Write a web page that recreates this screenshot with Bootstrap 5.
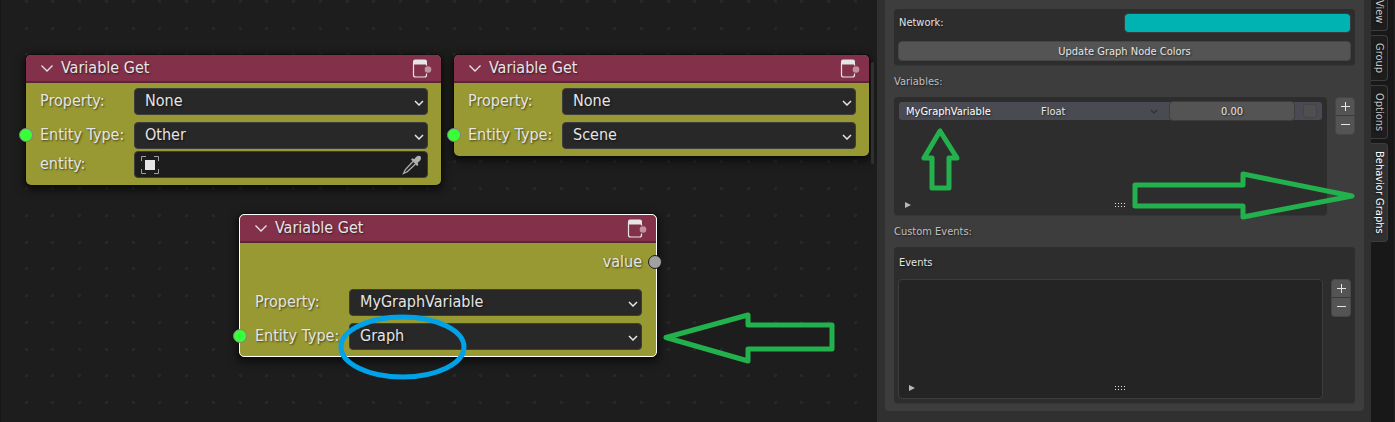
<!DOCTYPE html>
<html lang="en" data-bs-theme="dark">
<head>
<meta charset="utf-8">
<meta name="viewport" content="width=device-width, initial-scale=1">
<title>Behavior Graphs</title>
<link href="https://cdn.jsdelivr.net/npm/bootstrap@5.3.0/dist/css/bootstrap.min.css" rel="stylesheet">
<style>
  body { background: #1d1d1d; color: #e5e5e5; font-family: "DejaVu Sans Condensed", "DejaVu Sans", sans-serif; font-size: 16px; line-height: 20px; text-shadow: 1px 1px 2px rgba(0,0,0,.6); }
  h2, h3 { font-size: inherit; line-height: inherit; font-weight: 400; margin: 0; color: inherit; }
  input, select, button { text-shadow: inherit; }

  /* Node editor */
  .node-canvas { border-left: 1px solid #161616; background: #1d1d1d url("data:image/svg+xml,%3Csvg xmlns='http://www.w3.org/2000/svg' width='107' height='107'%3E%3Cdefs%3E%3Cg id='r' fill='%23272727'%3E%3Cpath d='M0 0h3v3h-3zM26 0h3v3h-3zM53 0h3v3h-3zM80 0h3v3h-3z'/%3E%3C/g%3E%3C/defs%3E%3Cuse href='%23r'/%3E%3Cuse href='%23r' y='27'/%3E%3Cuse href='%23r' y='53'/%3E%3Cuse href='%23r' y='80'/%3E%3C/svg%3E") 24px 0; }
  .node { position: absolute; width: 415px; border-radius: 5px; background: #999933; box-shadow: 0 0 0 1px rgba(10,10,10,.6), 0 3px 9px 2px rgba(0,0,0,.6); }
  .node.selected { width: 418px; border: 1px solid #fff; }
  .node-head { height: 28px; padding: 0 9px 0 15px; background: #83314a; border-bottom: 2px solid #5a2534; border-radius: 5px 5px 0 0; }
  .node-body { display: flex; flex-direction: column; gap: 7px; padding: 5px 13px 7px 14px; }
  .selected .node-body { padding: 5px 14px 6px 15px; }
  .node-output { margin-bottom: 7px; }
  .node-pair { display: flex; flex-direction: column; gap: 2px; }
  .node-line { height: 27px; }
  .node-line > label { flex: 0 0 94px; padding-bottom: 2px; white-space: nowrap; }
  .node-field { height: 27px; padding: 0 20px 1px 10px; border: 1px solid #3d3d3d; border-radius: 4px; color: #e5e5e5; background-color: #282828; font-size: 16px; line-height: 20px; }
  select.node-field { background-image: url("data:image/svg+xml,%3Csvg xmlns='http://www.w3.org/2000/svg' width='10' height='6'%3E%3Cpath d='M1 1l4 4 4-4' fill='none' stroke='%23e5e5e5' stroke-width='1.5'/%3E%3C/svg%3E"); background-size: 10px 6px; background-position: right 3px top 11px; }
  .entity-wrap { background: #1d1d1d; border: 1px solid #3d3d3d; border-radius: 4px; height: 27px; padding: 0 5px; }
  .entity-wrap input { background: none; border: 0; outline: 0; min-width: 0; color: inherit; }
  .plain-btn { background: none; border: 0; padding: 0; line-height: 0; color: inherit; }
  .socket { position: absolute; width: 14px; height: 14px; border-radius: 50%; border: 1px solid #808080; background: #39ff39; }
  .socket-in { left: -7px; }
  .socket-out { right: -6px; background: #a1a1a1; border: 1px solid #1d1d1d; }
  .view-scroll { position: absolute; right: 3px; top: 62px; width: 3px; height: 102px; border-radius: 2px; background: #303030; }

  /* Sidebar */
  .side { flex: 0 0 494px; padding: 0 7px 10px 8px; background: #303030; font-size: 11px; line-height: 16px; }
  .panel { background: #3d3d3d; border-radius: 0 0 4px 4px; padding: 9px 9px 8px; }
  .box { background: #2d2d2d; border-radius: 4px; box-shadow: 0 1px 0 #353535; }
  .soft { color: #bfbfbf; padding: 9px 0 7px; }
  .inset { padding-left: 1px; }
  .swatch { -webkit-appearance: none; appearance: none; width: 227px; height: 20px; padding: 0; border: 1px solid #3d3d3d; border-radius: 4px; background: none; overflow: hidden; }
  .swatch::-webkit-color-swatch-wrapper { padding: 0; }
  .swatch::-webkit-color-swatch { border: 0; border-radius: 3px; }
  .tool { background: #545454; border: 1px solid #464646; border-radius: 4px; color: #e5e5e5; height: 20px; padding: 1px 0 0; font-size: 11px; line-height: 16px; }
  .var-list { height: 118px; padding: 5px 5px 4px; }
  .var-row { height: 18px; background: #4a4b52; border-radius: 3px; }
  .var-ctl { height: 18px; font-size: 11px; line-height: 16px; border: 0; background-color: transparent; color: #e5e5e5; border-radius: 3px; min-width: 0; }
  .var-name { width: 135px; padding: 0 0 0 7px; color: #fff; }
  .var-type { width: 135px; padding: 1px 0 0 7px; background-image: url("data:image/svg+xml,%3Csvg xmlns='http://www.w3.org/2000/svg' width='8' height='5'%3E%3Cpath d='M1 1l3 3 3-3' fill='none' stroke='%23303036' stroke-width='1.3'/%3E%3C/svg%3E"); background-size: 8px 5px; background-position: right 11px top 7px; }
  .var-value { height: 20px; padding: 0; background: #545454; border: 1px solid #3d3d3d; border-radius: 4px; text-align: center; }
  .var-row .form-check-input { width: 14px; height: 14px; border: 1px solid #434348; border-radius: 3px; background: #4f4f51; margin: 0 5px 0 8px; }
  .list-foot { height: 12px; padding-left: 6px; position: relative; }
  .grip { position: absolute; left: 51%; }
  .pm { width: 20px; }
  .pm button { display: flex; align-items: center; justify-content: center; width: 20px; height: 19px; padding: 0 0 2px; background: #545454; border: 1px solid #464646; color: #e5e5e5; }
  .pm button:first-child { border-radius: 4px 4px 0 0; border-bottom-color: #3a3a3a; }
  .pm button:last-child { border-radius: 0 0 4px 4px; border-top: 0; }
  .event-list { height: 120px; padding: 4px; background: #242424; border: 1px solid #3d3d3d; border-radius: 4px; }

  /* Category tabs */
  .tabs { flex: 0 0 24px; background: #181818; font-size: 11px; line-height: 16px; gap: 4px; border-right: 1px solid #222; }
  .tabs a { display: block; width: 17px; padding: 7px 0; writing-mode: vertical-rl; white-space: nowrap; color: #c8c8c8; text-decoration: none; background: #1d1d1d; border: 1px solid #3d3d3d; border-left: 0; border-radius: 0 4px 4px 0; }
  .tabs a.cut { height: 31px; padding-top: 0; display: flex; justify-content: flex-end; border-top: 0; border-radius: 0 0 4px 0; }
  .tabs a.active { background: #303030; color: #fff; }

  .mark-up { position: absolute; fill: none; stroke: #22b14c; stroke-width: 5; stroke-linejoin: round; pointer-events: none; }
</style>
</head>
<body>
<svg class="d-none" aria-hidden="true">
  <symbol id="fold" viewBox="0 0 12 8"><path d="M.5 1.500l5.500 5.500L11.500 1.500" fill="none" stroke="#e5e5e5" stroke-width="1.300"/></symbol>
  <symbol id="nodeicon" viewBox="0 0 20 20">
    <path d="M1 3.500a2 2 0 0 1 2-2h10a2 2 0 0 1 2 2v3H1z" fill="#e5e5e5"/>
    <path d="M1.500 5v12a2 2 0 0 0 2 2h9a2 2 0 0 0 2-2v-1.500M14.500 6v1.500" fill="none" stroke="#e5e5e5" stroke-width="1.200"/>
    <circle cx="16" cy="11.500" r="3.300" fill="#c092a0"/>
  </symbol>
  <symbol id="plus" viewBox="0 0 10 10"><path d="M5.500 1v9M1 5.500h9" stroke="#e5e5e5" fill="none"/></symbol>
  <symbol id="minus" viewBox="0 0 10 10"><path d="M1 5.500h9" stroke="#e5e5e5" fill="none"/></symbol>
  <symbol id="tri" viewBox="0 0 6 6"><path d="M0 0l6 3-6 3z" fill="#b8b8b8"/></symbol>
  <symbol id="dots" viewBox="0 0 11 5"><path d="M0 0h1v1H0zM3 0h1v1H3zM6 0h1v1H6zM9 0h1v1H9zM0 3h1v1H0zM3 3h1v1H3zM6 3h1v1H6zM9 3h1v1H9z" fill="#e5e5e5"/></symbol>
</svg>

<div class="d-flex min-vh-100 overflow-hidden position-relative">
  <main class="node-canvas flex-grow-1 position-relative overflow-hidden">

    <section class="node" style="left:25px;top:55px">
      <div class="node-head d-flex align-items-center">
        <svg width="12" height="8"><use href="#fold"/></svg>
        <h2 class="ms-2">Variable Get</h2>
        <svg class="ms-auto" width="20" height="20"><use href="#nodeicon"/></svg>
      </div>
      <div class="node-body">
        <div class="node-line d-flex align-items-center"><label for="p1">Property:</label><select id="p1" class="form-select node-field"><option>None</option></select></div>
        <div class="node-pair">
          <div class="node-line d-flex align-items-center"><label for="t1">Entity Type:</label><select id="t1" class="form-select node-field"><option>Other</option></select></div>
          <div class="node-line d-flex align-items-center"><label for="e1">entity:</label>
            <div class="entity-wrap d-flex align-items-center flex-grow-1">
              <svg width="20" height="20" viewBox="0 0 20 20"><path d="M1.500 6V1.500H6M14 1.500h4.500V6M18.500 14v4.500H14M6 18.500H1.500V14" fill="none" stroke="#a0a0a0"/><path d="M5 5h10v10H5z" fill="#e5e5e5"/></svg>
              <input id="e1" type="text" class="flex-grow-1">
              <button class="plain-btn" type="button" aria-label="Pick entity"><svg width="20" height="20" viewBox="0 0 20 20"><path d="M11 6.500l-7.500 8c-.8.800-.6 1.500-1.300 2.500l-.7 1.500 1.500-.7c1-.6 1.800-.6 2.500-1.300L13.500 9" fill="none" stroke="#b0b0b0" stroke-width="1.200"/><path d="M9 4.500l1.500-1.300 1.600 1.100c1.400-2 2.900-3.600 4.700-3.600 1.900 0 2.700 1.800 2 3.500-.5 1.500-1.900 2.600-3.200 3.600l.8 2-1.300 1.300z" fill="#b0b0b0"/></svg></button>
            </div>
          </div>
        </div>
      </div>
      <span class="socket socket-in" style="top:73px"></span>
    </section>

    <section class="node" style="left:453px;top:55px">
      <div class="node-head d-flex align-items-center">
        <svg width="12" height="8"><use href="#fold"/></svg>
        <h2 class="ms-2">Variable Get</h2>
        <svg class="ms-auto" width="20" height="20"><use href="#nodeicon"/></svg>
      </div>
      <div class="node-body">
        <div class="node-line d-flex align-items-center"><label for="p2">Property:</label><select id="p2" class="form-select node-field"><option>None</option></select></div>
        <div class="node-line d-flex align-items-center"><label for="t2">Entity Type:</label><select id="t2" class="form-select node-field"><option>Scene</option></select></div>
      </div>
      <span class="socket socket-in" style="top:73px"></span>
    </section>

    <section class="node selected" style="left:238px;top:214px">
      <div class="node-head d-flex align-items-center">
        <svg width="12" height="8"><use href="#fold"/></svg>
        <h2 class="ms-2">Variable Get</h2>
        <svg class="ms-auto" width="20" height="20"><use href="#nodeicon"/></svg>
      </div>
      <div class="node-body">
        <div class="node-line node-output d-flex align-items-center justify-content-end">value</div>
        <div class="node-line d-flex align-items-center"><label for="p3">Property:</label><select id="p3" class="form-select node-field"><option>MyGraphVariable</option></select></div>
        <div class="node-line d-flex align-items-center"><label for="t3">Entity Type:</label><select id="t3" class="form-select node-field"><option>Graph</option></select></div>
      </div>
      <span class="socket socket-out" style="top:40px"></span>
      <span class="socket socket-in" style="top:114px"></span>
    </section>

    <svg class="mark-up" style="left:337px;top:313px;stroke:#00a2e8" width="130" height="68"><ellipse cx="64.500" cy="34" rx="61.500" ry="30"/></svg>
    <svg class="mark-up" style="left:660px;top:307px" width="180" height="60"><path d="M5 30.500L87 8v10h84v24H87v12z"/></svg>
    <div class="view-scroll"></div>
  </main>

  <aside class="side">
    <div class="panel">
      <div class="box p-1">
        <div class="d-flex align-items-center justify-content-between mb-2">
          <label for="net" class="inset">Network:</label>
          <input id="net" type="color" class="swatch" value="#00b3b3">
        </div>
        <button type="button" class="tool w-100 d-block">Update Graph Node Colors</button>
      </div>

      <h3 class="soft">Variables:</h3>
      <div class="d-flex">
        <div class="box var-list flex-grow-1 d-flex flex-column">
          <div class="var-row d-flex align-items-center">
            <input type="text" class="var-ctl var-name" value="MyGraphVariable" aria-label="Variable name">
            <select class="form-select var-ctl var-type" aria-label="Variable type"><option>Float</option></select>
            <input type="text" class="var-ctl var-value flex-grow-1" value="0.00" aria-label="Value">
            <input type="checkbox" class="form-check-input flex-shrink-0" aria-label="Enabled">
          </div>
          <div class="list-foot d-flex align-items-center mt-auto">
            <svg width="6" height="6"><use href="#tri"/></svg>
            <svg class="grip" width="11" height="5"><use href="#dots"/></svg>
          </div>
        </div>
        <div class="pm flex-shrink-0 ms-2">
          <button type="button" aria-label="Add variable"><svg width="10" height="10"><use href="#plus"/></svg></button>
          <button type="button" aria-label="Remove variable"><svg width="10" height="10"><use href="#minus"/></svg></button>
        </div>
      </div>

      <h3 class="soft">Custom Events:</h3>
      <div class="box p-1">
        <h3 class="my-1 inset">Events</h3>
        <div class="d-flex mt-2">
          <div class="event-list flex-grow-1 d-flex flex-column">
            <div class="list-foot d-flex align-items-center mt-auto">
              <svg width="6" height="6"><use href="#tri"/></svg>
              <svg class="grip" width="11" height="5"><use href="#dots"/></svg>
            </div>
          </div>
          <div class="pm flex-shrink-0 ms-2">
            <button type="button" aria-label="Add event"><svg width="10" height="10"><use href="#plus"/></svg></button>
            <button type="button" aria-label="Remove event"><svg width="10" height="10"><use href="#minus"/></svg></button>
          </div>
        </div>
      </div>
    </div>
  </aside>

  <nav class="tabs d-flex flex-column" aria-label="Sidebar categories">
    <a class="cut" href="#">View</a>
    <a href="#">Group</a>
    <a href="#">Options</a>
    <a class="active" href="#" aria-current="page">Behavior Graphs</a>
  </nav>

  <svg class="mark-up" style="right:430px;top:124px" width="50" height="70"><path d="M25 7L9 34h8v30h17V34h8z"/></svg>
  <svg class="mark-up" style="right:37px;top:168px" width="227" height="56"><path d="M4 17h108V6l109 22L112 49V38H4z"/></svg>
</div>
<script src="https://cdn.jsdelivr.net/npm/bootstrap@5.3.0/dist/js/bootstrap.bundle.min.js"></script>
</body>
</html>
